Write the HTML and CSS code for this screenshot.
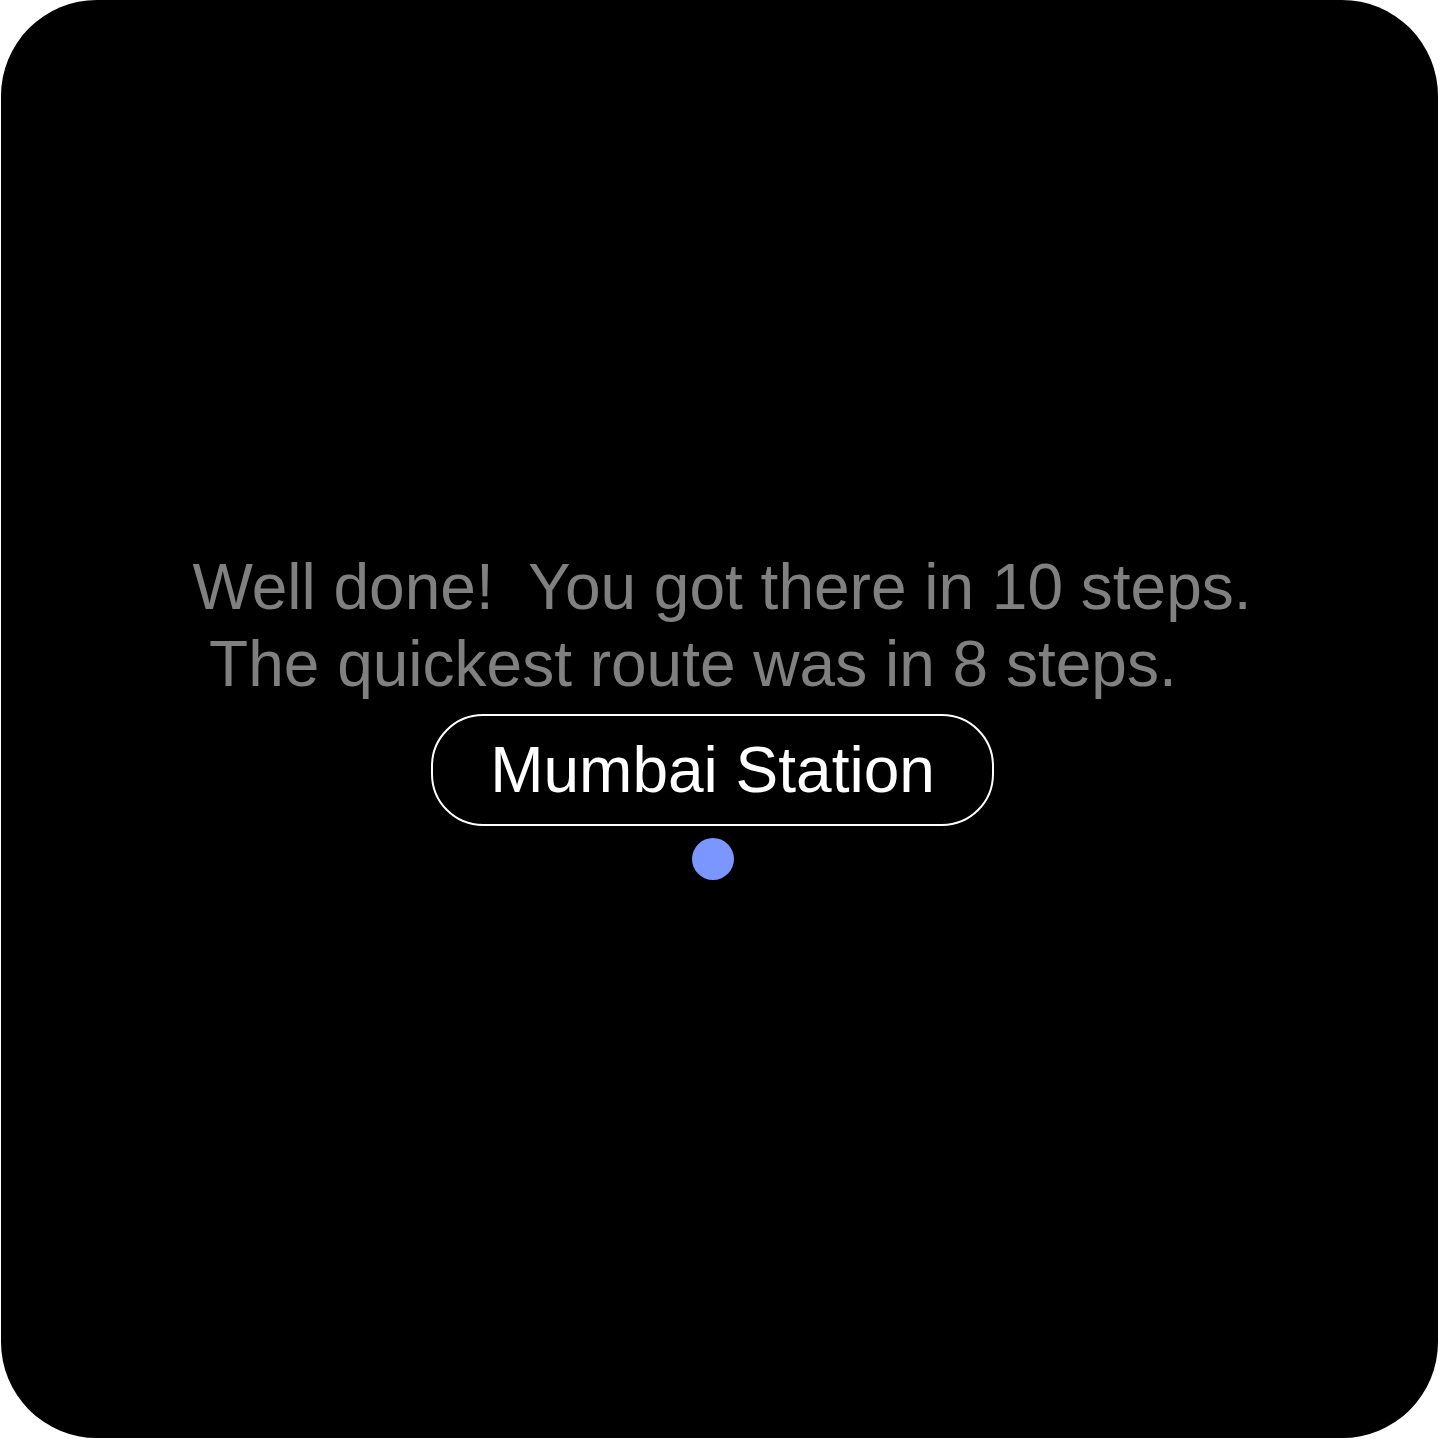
FILE: index.html
```html
<!DOCTYPE html>
<html>
<head>
<meta charset="utf-8">
<link rel="stylesheet" href="styles.css">
</head>
<body>
<main class="screen">
  <div class="message">Well done!  You got there in 10 steps.
 The quickest route was in 8 steps.</div>
  <div class="station">Mumbai Station</div>
  <div class="marker"></div>
</main>
</body>
</html>
```
FILE: styles.css
```css
html, body {
  margin: 0;
  padding: 0;
  background: #ffffff;
}
.screen {
  width: 1437px;
  height: 1438px;
  margin-left: 1px;
  box-sizing: border-box;
  background: #000000;
  border-radius: 96px;
  display: flex;
  flex-direction: column;
  align-items: center;
  padding-top: 549px;
  font-family: "Liberation Sans", Arial, sans-serif;
}
.message {
  white-space: pre;
  color: #808080;
  font-size: 64px;
  line-height: 77px;
  margin-left: 5px;
}
.station {
  margin-top: 11px;
  box-sizing: border-box;
  height: 112px;
  width: 563px;
  border: 2px solid #ffffff;
  border-radius: 52px;
  color: #ffffff;
  font-size: 64px;
  display: flex;
  align-items: center;
  justify-content: center;
  margin-right: 14px;
}
.marker {
  margin-top: 12px;
  width: 42px;
  height: 42px;
  border-radius: 50%;
  background: #7b96ff;
  margin-right: 13px;
}
```
